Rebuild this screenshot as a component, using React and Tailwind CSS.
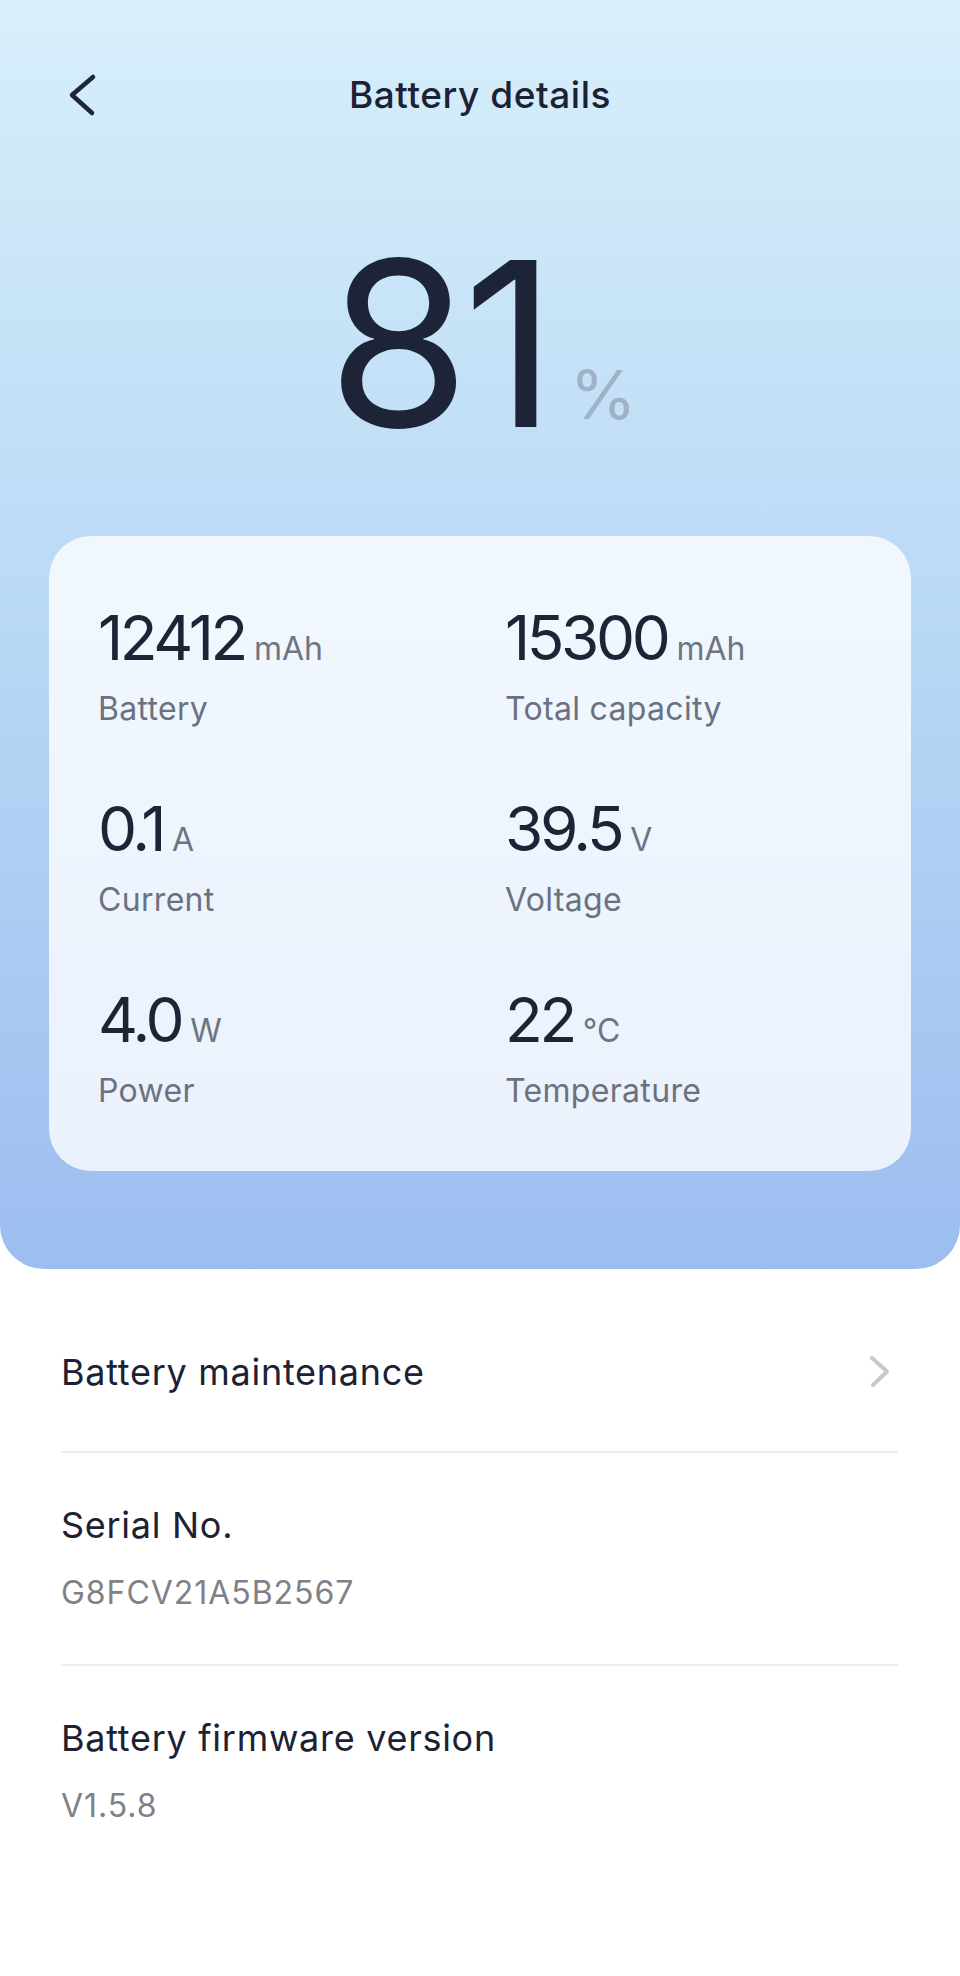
import React from "react";

const stats = [
  { value: "12412", unit: "mAh", label: "Battery" },
  { value: "15300", unit: "mAh", label: "Total capacity" },
  { value: "0.1", unit: "A", label: "Current" },
  { value: "39.5", unit: "V", label: "Voltage" },
  { value: "4.0", unit: "W", label: "Power" },
  { value: "22", unit: "°C", label: "Temperature" },
];

const BatteryDetails = () => {
  return (
    <div className="w-[960px] min-h-[1976px] bg-white font-['Inter','Noto_Sans',sans-serif] text-[#1e2335]">
      {/* Header */}
      <div className="rounded-b-[44px] bg-[linear-gradient(180deg,#d8effb_0%,#c4e1f7_30%,#b9d8f5_50%,#9cbdf0_100%)] pb-[98px]">
        {/* Nav */}
        <div className="grid grid-cols-[1fr_auto_1fr] items-center pt-[76px]">
          <button className="pl-[68px] flex items-center h-[37px]">
            <svg width="30" height="44" viewBox="0 0 30 44" fill="none">
              <path
                d="M25 4 L4 22 L24 40"
                stroke="#1f2638"
                strokeWidth="4.5"
                strokeLinecap="round"
                strokeLinejoin="round"
              />
            </svg>
          </button>
          <h1 className="text-[37px] leading-none font-medium tracking-[0.015em] text-[#1c2233]">
            Battery details
          </h1>
          <div />
        </div>

        {/* Percentage */}
        <div className="mt-[115px] flex justify-center items-baseline pl-[4px]">
          <span className="text-[230px] leading-none font-normal tracking-[-0.03em] text-[#1e2438]">
            81
          </span>
          <span className="relative -top-[8px] ml-[20px] text-[68px] leading-none text-[#9fb2c7]">
            %
          </span>
        </div>

        {/* Stats card */}
        <div className="mt-[78px] mx-[49px] rounded-[42px] bg-white/[0.78] pt-[71px] pb-[64px] pl-[49px]">
          <div className="grid grid-cols-[407px_1fr] gap-y-[73px]">
            {stats.map((s) => (
              <div key={s.label} className="flex flex-col">
                <div className="flex items-baseline h-[62px]">
                  <span className="text-[62px] leading-none font-normal tracking-[-0.055em]">
                    {s.value}
                  </span>
                  <span className="ml-[9px] text-[32px] leading-none text-[#6e7482]">
                    {s.unit}
                  </span>
                </div>
                <span className="mt-[24px] text-[32px] leading-none tracking-[0.01em] text-[#6b7180]">
                  {s.label}
                </span>
              </div>
            ))}
          </div>
        </div>
      </div>

      {/* List */}
      <div className="mx-[61px] w-[837px]">
        <div className="flex items-center justify-between pt-[85px] pb-[61px] border-b-2 border-[#ececee]">
          <span className="text-[36px] leading-none tracking-[0.02em] text-[#1c2233]">
            Battery maintenance
          </span>
          <svg width="22" height="34" viewBox="0 0 22 34" fill="none" className="mr-[7px]">
            <path
              d="M3 3 L18 16.5 L4 30"
              stroke="#c9c9cc"
              strokeWidth="4"
              strokeLinecap="round"
              strokeLinejoin="round"
            />
          </svg>
        </div>

        <div className="flex flex-col pt-[54px] pb-[55px] border-b-2 border-[#ececee]">
          <span className="text-[36px] leading-none tracking-[0.02em] text-[#1c2233]">
            Serial No.
          </span>
          <span className="mt-[34px] text-[32px] leading-none tracking-[0.03em] text-[#7f8187]">
            G8FCV21A5B2567
          </span>
        </div>

        <div className="flex flex-col pt-[54px]">
          <span className="text-[36px] leading-none tracking-[0.02em] text-[#1c2233]">
            Battery firmware version
          </span>
          <span className="mt-[34px] text-[32px] leading-none tracking-[0.03em] text-[#7f8187]">
            V1.5.8
          </span>
        </div>
      </div>
    </div>
  );
};

export default BatteryDetails;
